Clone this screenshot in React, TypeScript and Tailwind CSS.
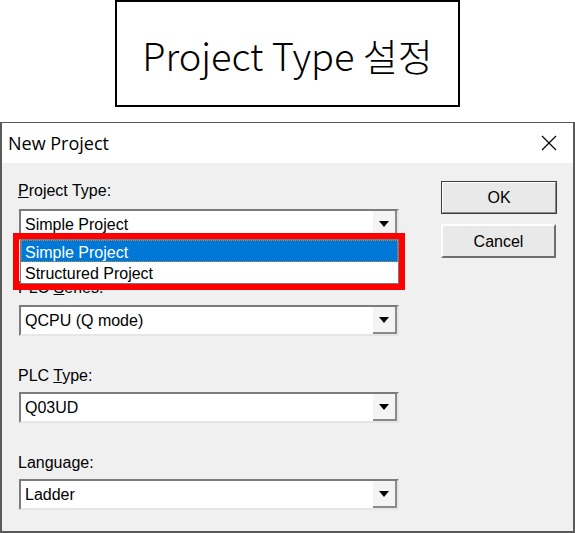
import React from "react";

const ui = { fontFamily: '"Liberation Sans", Arial, sans-serif' };

function Combo({ value }: { value: string }) {
  return (
    <div className="flex h-[31px] w-[380px] border-2 border-t-[#7c7c7c] border-l-[#7c7c7c] border-b-[#e6e6e6] border-r-[#e6e6e6] bg-white">
      <div className="flex flex-1 items-center pl-[4px] text-[16px] leading-[20px] text-black">{value}</div>
      <div className="flex w-[24px] items-center justify-center border-r-2 border-b-2 border-[#8a8a8a] bg-[#f4f4f4]">
        <svg width="10" height="6" viewBox="0 0 10 6">
          <polygon points="0,0 10,0 5,6" fill="#000" />
        </svg>
      </div>
    </div>
  );
}

function Label({ children }: { children: React.ReactNode }) {
  return <div className="h-[20px] text-[16px] leading-[20px] text-black">{children}</div>;
}

export default function App() {
  return (
    <div className="relative h-[533px] w-[575px] overflow-hidden bg-white" style={ui}>
      {/* 상단 제목 박스 */}
      <div className="flex justify-center">
        <div
          className="flex h-[107px] w-[345px] items-center justify-center border-2 border-black pt-[2px] text-[38px] font-light text-black"
          style={{ fontFamily: '"Noto Sans CJK KR", "Noto Sans", sans-serif' }}
        >
          Project Type 설정
        </div>
      </div>

      {/* 다이얼로그 */}
      <div className="mt-[15px] flex h-[411px] flex-col border-x-2 border-b-2 border-t border-[#5a5a5a]">
        <div className="flex h-[40px] items-center justify-between bg-white pl-[6px] pr-[16px]">
          <span className="text-[18px] text-black" style={{ fontFamily: '"Open Sans", "Noto Sans", sans-serif' }}>
            New Project
          </span>
          <svg width="16" height="16" viewBox="0 0 16 16">
            <path d="M1 1 L15 15 M15 1 L1 15" stroke="#000" strokeWidth="1.2" />
          </svg>
        </div>

        <div className="flex flex-1 bg-[#f0f0f0] pl-[16px]">
          <div className="flex w-[381px] flex-col pt-[18px]">
            <Label>
              <span className="underline">P</span>roject Type:
            </Label>
            <div className="mt-[8px] pl-[1px]">
              <Combo value="Simple Project" />
            </div>
            <div className="mt-[38px]">
              <Label>
                PLC <span className="underline">S</span>eries:
              </Label>
            </div>
            <div className="mt-[7px] pl-[1px]">
              <Combo value="QCPU (Q mode)" />
            </div>
            <div className="mt-[30px]">
              <Label>
                PLC <span className="underline">T</span>ype:
              </Label>
            </div>
            <div className="mt-[6px] pl-[1px]">
              <Combo value="Q03UD" />
            </div>
            <div className="mt-[30px]">
              <Label>Language:</Label>
            </div>
            <div className="mt-[6px] pl-[1px]">
              <Combo value="Ladder" />
            </div>
          </div>

          <div className="ml-[42px] flex flex-col pt-[18px]">
            <div className="border border-[#3c3c3c]">
              <div className="flex h-[31px] w-[114px] items-center justify-center border border-t-white border-l-white border-b-[#8a8a8a] border-r-[#8a8a8a] bg-[#e9e9e9] text-[16px] text-black">
                OK
              </div>
            </div>
            <div className="mt-[10px] flex h-[34px] w-[115px] items-center justify-center border-2 border-t-white border-l-white border-b-[#6e6e6e] border-r-[#6e6e6e] bg-[#e9e9e9] pt-[1px] text-[16px] text-black">
              Cancel
            </div>
          </div>
        </div>
      </div>

      {/* 펼쳐진 목록 + 빨간 강조 */}
      <div className="absolute left-[20px] top-[239px] w-[379px] border border-[#7a7a7a] bg-white text-[16px] leading-[20px]">
        <div className="flex h-[22px] items-center border border-dotted border-[#c08a4a] bg-[#0078d7] pl-[3px] pt-[3px] text-white">
          Simple Project
        </div>
        <div className="flex h-[21px] items-center pl-[4px] pt-[3px] text-black">Structured Project</div>
      </div>
      <div className="absolute left-[13px] top-[233px] h-[57px] w-[392px] border-[6px] border-[#ff0000]" />
    </div>
  );
}
